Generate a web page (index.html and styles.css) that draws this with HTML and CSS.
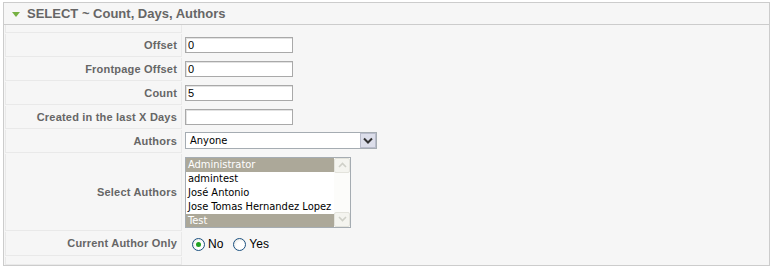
FILE: index.html
```html
<!DOCTYPE html>
<html lang="en">
<head>
    <meta charset="UTF-8">
    <title>SELECT ~ Count, Days, Authors</title>
    <link rel="stylesheet" href="styles.css">
</head>
<body>

<div class="panel">
    <h3 class="panel-title"><span class="toggler"></span>SELECT ~ Count, Days, Authors</h3>

    <div class="params">
        <div class="key"></div>
        <div class="value"></div>

        <div class="key">Offset</div>
        <div class="value"><input type="text" class="text-input" value="0"></div>

        <div class="key">Frontpage Offset</div>
        <div class="value"><input type="text" class="text-input" value="0"></div>

        <div class="key">Count</div>
        <div class="value"><input type="text" class="text-input" value="5"></div>

        <div class="key">Created in the last X Days</div>
        <div class="value"><input type="text" class="text-input" value=""></div>

        <div class="key">Authors</div>
        <div class="value">
            <div class="dropdown">
                <span class="dropdown-text">Anyone</span>
                <span class="dropdown-button">
                    <svg width="10" height="7" viewBox="0 0 10 7"><path d="M1 1.5 L5 5.5 L9 1.5" fill="none" stroke="#333" stroke-width="2"/></svg>
                </span>
            </div>
        </div>

        <div class="key">Select Authors</div>
        <div class="value">
            <div class="listbox">
                <div class="options">
                    <div class="option selected">Administrator</div>
                    <div class="option">admintest</div>
                    <div class="option">José Antonio</div>
                    <div class="option">Jose Tomas Hernandez Lopez</div>
                    <div class="option selected">Test</div>
                </div>
                <div class="scrollbar">
                    <span class="scroll-btn">
                        <svg width="9" height="6" viewBox="0 0 9 6"><path d="M1 5 L4.5 1.5 L8 5" fill="none" stroke="#cfd0c8" stroke-width="1.6"/></svg>
                    </span>
                    <span class="scroll-track"></span>
                    <span class="scroll-btn">
                        <svg width="9" height="6" viewBox="0 0 9 6"><path d="M1 1 L4.5 4.5 L8 1" fill="none" stroke="#cfd0c8" stroke-width="1.6"/></svg>
                    </span>
                </div>
            </div>
        </div>

        <div class="key">Current Author Only</div>
        <div class="value">
            <span class="radio checked"></span><span class="radio-label">No</span>
            <span class="radio"></span><span class="radio-label">Yes</span>
        </div>

        <div class="key"></div>
        <div class="value"></div>
    </div>
</div>

</body>
</html>
```

FILE: styles.css
```css
body {
    margin: 0;
    padding: 2px 1px 0 3px;
    background-color: #fff;
    font-family: "Liberation Sans", Arial, sans-serif;
    font-size: 11px;
}

.panel {
    height: 262px;
    border: 1px solid #ccc;
    background-color: #f6f6f6;
}

.panel-title {
    margin: 0;
    height: 21px;
    line-height: 21px;
    padding-left: 8px;
    border-bottom: 1px solid #ccc;
    font-size: 13px;
    font-weight: bold;
    color: #666;
    display: flex;
    align-items: center;
}

.toggler {
    width: 0;
    height: 0;
    margin: 1px 7px 0 0;
    border-left: 4px solid transparent;
    border-right: 4px solid transparent;
    border-top: 5px solid #76b043;
}

.params {
    display: grid;
    grid-template-columns: 177px 1fr;
    grid-template-rows: 8px repeat(5, 23px) 77px 24px 8px;
    gap: 1px;
    padding: 0 1px;
}

.key {
    box-sizing: border-box;
    border-left: 1px solid #e9e9e9;
    border-right: 1px solid #e9e9e9;
    border-bottom: 1px solid #e9e9e9;
    background-color: #f6f6f6;
    color: #666;
    font-weight: bold;
    letter-spacing: 0.2px;
    padding: 0 4px 1px 0;
    display: flex;
    align-items: center;
    justify-content: flex-end;
}

.value {
    padding-left: 2px;
    display: flex;
    align-items: center;
}

.text-input {
    box-sizing: border-box;
    width: 108px;
    height: 16px;
    margin: 0 0 1px 0;
    padding: 0 2px;
    border: 1px solid #a9a9a9;
    box-shadow: inset 1px 1px 0 #e2e2e2;
    background: #fff;
    font-family: "Liberation Sans", Arial, sans-serif;
    font-size: 11px;
    color: #000;
}

.dropdown {
    box-sizing: border-box;
    width: 192px;
    height: 17px;
    margin-bottom: 2px;
    border: 1px solid #a5acb2;
    background: #fff;
    display: flex;
    align-items: center;
    justify-content: space-between;
}

.dropdown-text,
.option {
    font-family: "DejaVu Sans Condensed", "DejaVu Sans", sans-serif;
    font-size: 11px;
    color: #000;
}

.dropdown-text {
    padding-left: 4px;
}

.dropdown-button {
    box-sizing: border-box;
    width: 16px;
    height: 15px;
    border: 1px solid #b9bccb;
    background: #dcdeea;
    display: flex;
    align-items: center;
    justify-content: center;
}

.listbox {
    box-sizing: border-box;
    width: 166px;
    height: 71px;
    margin-bottom: 1px;
    border: 1px solid #a5acb2;
    background: #fff;
    display: flex;
}

.options {
    flex: 1;
    min-width: 0;
    overflow: hidden;
}

.option {
    height: 14px;
    line-height: 14px;
    padding-left: 2px;
    white-space: nowrap;
}

.option.selected {
    background-color: #aca899;
    color: #fff;
}

.scrollbar {
    width: 16px;
    display: flex;
    flex-direction: column;
    background: #fcfcfa;
}

.scroll-btn {
    box-sizing: border-box;
    height: 15px;
    border: 1px solid #e3e3dc;
    border-radius: 2px;
    background: #f4f4ef;
    display: flex;
    align-items: center;
    justify-content: center;
}

.scroll-track {
    flex: 1;
}

.radio {
    box-sizing: border-box;
    width: 13px;
    height: 13px;
    margin: 0 3px 0 7px;
    border: 1px solid #1c5180;
    border-radius: 50%;
    background: radial-gradient(circle at 60% 60%, #fff 40%, #dcdcd6 100%);
    position: relative;
}

.radio.checked::after {
    content: "";
    position: absolute;
    left: 3px;
    top: 3px;
    width: 5px;
    height: 5px;
    border-radius: 50%;
    background: #21a121;
}

.radio-label {
    font-size: 12px;
    color: #000;
}

.radio-label + .radio {
    margin-left: 10px;
}
```
